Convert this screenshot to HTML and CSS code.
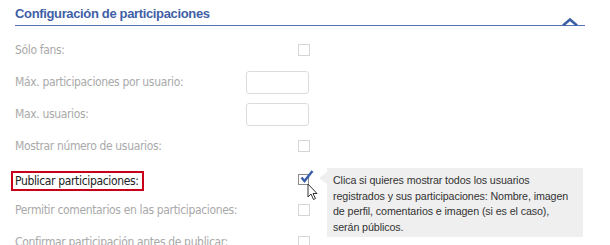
FILE: index.html
```html
<!DOCTYPE html>
<html lang="es">
<head>
<meta charset="utf-8">
<link rel="stylesheet" href="styles.css">
</head>
<body>
<div class="panel">
  <div class="header">
    <h2 class="title">Configuración de participaciones</h2>
    <svg class="chevron" width="16" height="8" viewBox="0 0 16 8"><path d="M1 7.5 L8 1.5 L15 7.5" fill="none" stroke="#3d5fa6" stroke-width="2.6"/></svg>
  </div>
  <div class="rows">
    <div class="row"><span class="label">Sólo fans:</span><span class="control"><span class="box"></span></span></div>
    <div class="row"><span class="label">Máx. participaciones por usuario:</span><span class="control"><span class="input"></span></span></div>
    <div class="row"><span class="label">Max. usuarios:</span><span class="control"><span class="input"></span></span></div>
    <div class="row"><span class="label">Mostrar número de usuarios:</span><span class="control"><span class="box"></span></span></div>
    <div class="row active">
      <span class="label"><span class="hl">Publicar participaciones:</span></span>
      <span class="control">
        <span class="box checked">
          <svg class="check" width="16" height="16" viewBox="0 0 16 16"><path d="M2.5 8.5 L5.5 12 L13.5 2" fill="none" stroke="#3b5ea8" stroke-width="2.4"/></svg>
          <svg class="cursor" width="12" height="18" viewBox="0 0 12 18"><path d="M1 1 L1 14 L4 11 L6.5 16.5 L8.5 15.5 L6 10.5 L10 10.5 Z" fill="#fff" stroke="#333" stroke-width="1" stroke-linejoin="round"/></svg>
        </span>
      </span>
      <div class="tip">Clica si quieres mostrar todos los usuarios registrados y sus participaciones: Nombre, imagen de perfil, comentarios e imagen (si es el caso), serán públicos.</div>
    </div>
    <div class="row"><span class="label">Permitir comentarios en las participaciones:</span><span class="control"><span class="box"></span></span></div>
    <div class="row"><span class="label">Confirmar participación antes de publicar:</span><span class="control"><span class="box"></span></span></div>
  </div>
</div>
</body>
</html>
```
FILE: styles.css
```css
html, body {
  margin: 0;
  padding: 0;
  background: #fff;
  overflow: hidden;
}
.panel {
  width: 570px;
  padding-left: 15px;
  font-family: "DejaVu Sans Condensed", "DejaVu Sans", sans-serif;
}
.header {
  position: relative;
  height: 25px;
  border-bottom: 1px solid #5673b3;
}
.title {
  margin: 0;
  padding-top: 5px;
  font-family: "Liberation Sans", Arial, sans-serif;
  font-size: 13px;
  font-weight: bold;
  color: #3f5fa6;
  line-height: 18px;
  letter-spacing: -0.35px;
}
.chevron {
  position: absolute;
  right: 7px;
  bottom: -1px;
}
.rows {
  padding-top: 8px;
}
.row {
  position: relative;
  height: 32px;
  display: flex;
  align-items: center;
  width: 295px;
}
.label {
  flex: 1;
  font-size: 12px;
  color: #a9a9a9;
  letter-spacing: -0.35px;
}
.control {
  display: flex;
  justify-content: flex-end;
  align-items: center;
}
.box {
  display: block;
  width: 10px;
  height: 10px;
  border: 1px solid #d6d6d6;
  position: relative;
}
.input {
  display: block;
  width: 61px;
  height: 21px;
  border: 1px solid #dcdcdc;
  border-radius: 3px;
  margin-right: 1px;
}
.active .label {
  color: #222;
}
.hl {
  display: inline-block;
  margin-left: -4px;
  padding: 1px 3px 1px 2px;
  border: 2px solid #c8001a;
  line-height: 14px;
  position: relative;
  top: 3px;
}
.box.checked {
  border-color: #8a8a8a;
  width: 9px;
  height: 9px;
  top: 1px;
  margin-right: 1px;
}
.check {
  position: absolute;
  left: 0px;
  top: -6px;
}
.cursor {
  position: absolute;
  left: 8px;
  top: 8px;
}
.tip {
  position: absolute;
  left: 312px;
  top: 6px;
  width: 236px;
  height: 61px;
  padding: 5px 14px 3px 6px;
  background: #efefef;
  font-family: "Liberation Sans", Arial, sans-serif;
  font-size: 10.7px;
  line-height: 15.5px;
  letter-spacing: -0.1px;
  color: #333;
}
.tip::before {
  content: "";
  position: absolute;
  left: -8px;
  top: 4px;
  border-top: 6px solid transparent;
  border-bottom: 6px solid transparent;
  border-right: 8px solid #efefef;
}
```
